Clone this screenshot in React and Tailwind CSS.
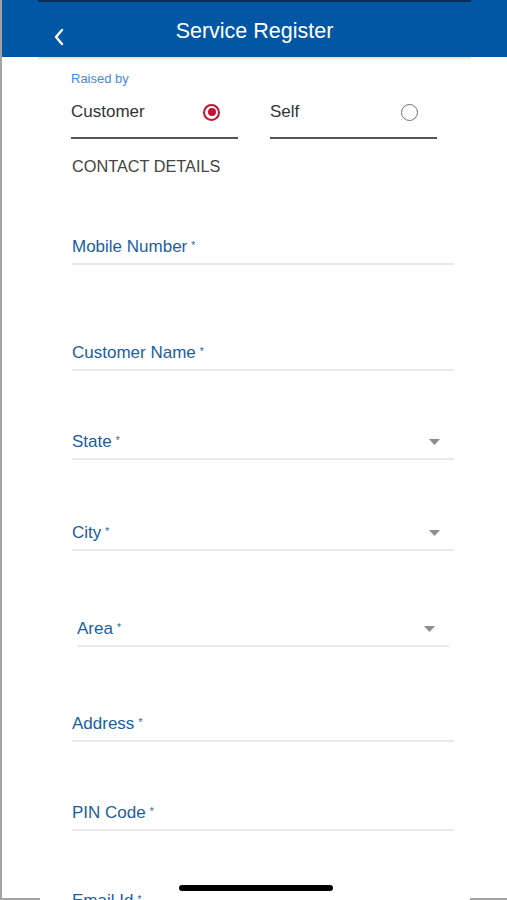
import React, { useState } from 'react';

const Caret = () => (
  <svg width="11" height="6" viewBox="0 0 11 6" className="shrink-0">
    <path d="M0 0 L11 0 L5.5 6 Z" fill="#8c8c8c" />
  </svg>
);

const Field = ({ label, select, className = '' }) => (
  <div className={`flex items-center justify-between border-b-2 border-[#e9e9e9] pb-[6px] ${className}`}>
    <span className="text-[17px] leading-[20px] text-[#1b5e9e]">
      {label}
      <sup className="ml-[4px] text-[10px] relative -top-[3px]">*</sup>
    </span>
    {select && <span className="mr-[14px]"><Caret /></span>}
  </div>
);

const Radio = ({ checked }) =>
  checked ? (
    <span className="w-[17px] h-[17px] rounded-full border-2 border-[#c8102e] flex items-center justify-center">
      <span className="w-[8px] h-[8px] rounded-full bg-[#c8102e]" />
    </span>
  ) : (
    <span className="w-[17px] h-[17px] rounded-full border-[1.5px] border-[#6f6f6f]" />
  );

const App = () => {
  const [raisedBy, setRaisedBy] = useState('customer');

  return (
    <div
      className="relative w-full h-[900px] overflow-hidden bg-white border-l-2 border-[#a3a3a3]"
      style={{ fontFamily: '"Liberation Sans", Arial, sans-serif' }}
    >
      {/* Header */}
      <header className="h-[57px] bg-[#0157a4] flex flex-col">
        <div className="mx-[36px] h-[2px] bg-[#0c2c5a]" />
        <div className="flex-1 flex items-center relative">
          <svg width="12" height="18" viewBox="0 0 12 18" className="ml-[51px] mt-[15px]">
            <path d="M9 2 L3 9 L9 16" stroke="white" strokeWidth="2.4" fill="none" strokeLinecap="round" strokeLinejoin="round" />
          </svg>
          <h1 className="absolute left-0 right-0 text-center text-white text-[21.5px] leading-none top-[30px] -translate-y-1/2">
            Service Register
          </h1>
        </div>
      </header>
      <div className="mx-[36px] h-[3px] bg-gradient-to-b from-[#d9d9d9] to-white" />

      <main className="px-[69px]">
        <div className="mt-[11px] text-[13px] leading-[16px] text-[#4b87da]">Raised by</div>

        <div className="mt-[15px] flex gap-[32px]">
          <button
            onClick={() => setRaisedBy('customer')}
            className="w-[167px] flex items-center justify-between border-b-2 border-[#555] pb-[15px] pr-[18px]"
          >
            <span className="text-[17px] leading-[20px] text-[#333]">Customer</span>
            <Radio checked={raisedBy === 'customer'} />
          </button>
          <button
            onClick={() => setRaisedBy('self')}
            className="w-[167px] flex items-center justify-between border-b-2 border-[#555] pb-[15px] pr-[19px]"
          >
            <span className="text-[17px] leading-[20px] text-[#333]">Self</span>
            <Radio checked={raisedBy === 'self'} />
          </button>
        </div>

        <div className="mt-[17px] text-[16.3px] leading-[20px] text-[#444] ml-[1px]">CONTACT DETAILS</div>

        <div className="ml-[1px] w-[382px]">
          <Field label="Mobile Number" className="mt-[61px]" />
          <Field label="Customer Name" className="mt-[78px]" />
          <Field label="State" select className="mt-[61px]" />
          <Field label="City" select className="mt-[63px]" />
          <Field label="Area" select className="mt-[68px] mx-[5px]" />
          <Field label="Address" className="mt-[67px]" />
          <Field label="PIN Code" className="mt-[61px]" />
          <Field label="Email Id" className="mt-[60px]" />
        </div>
      </main>

      {/* home indicator */}
      <div className="absolute left-[177px] top-[885px] w-[154px] h-[6px] rounded-full bg-black" />
      <div className="absolute left-0 bottom-0 w-[38px] h-[2px] bg-[#a3a3a3]" />
      <div className="absolute right-0 bottom-0 w-[37px] h-[2px] bg-[#a3a3a3]" />
    </div>
  );
};

export default App;
